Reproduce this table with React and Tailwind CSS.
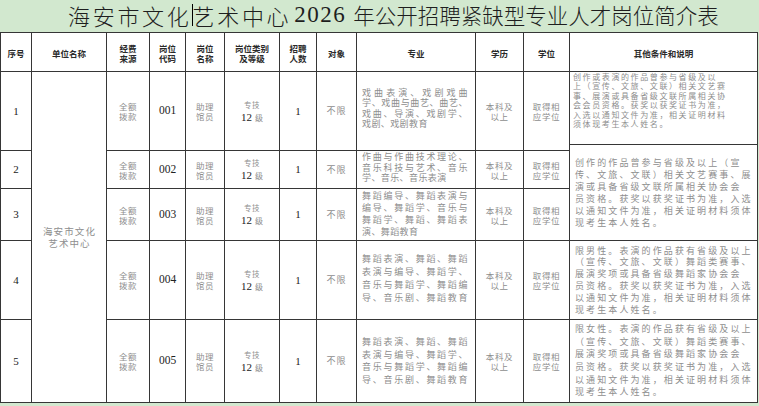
import React from "react";

const cjk = "font-['Noto_Sans_CJK_SC',sans-serif]";
const serif = "font-['Liberation_Serif','Noto_Sans_CJK_SC',serif]";
const gray = "text-[#8e8e8e]";

const rows = [
  {
    n: "1",
    code: "001",
    rc: "row-start-2 row-end-4",
    major: ["戏曲表演、戏剧戏曲", "学、戏曲与曲艺、曲艺、", "戏曲、导演、戏剧学、", "戏剧、戏剧教育"],
    majorLead: "leading-[10.5px] pb-[5px]",
    lastJustify: false,
  },
  {
    n: "2",
    code: "002",
    rc: "row-start-4 row-end-5",
    major: ["作曲与作曲技术理论、", "音乐科技与艺术、音乐", "学、音乐、音乐表演"],
    majorLead: "leading-[10.5px] pb-[3px]",
    lastJustify: false,
  },
  {
    n: "3",
    code: "003",
    rc: "row-start-5 row-end-6",
    major: ["舞蹈编导、舞蹈表演与", "编导、舞蹈学、音乐与", "舞蹈学、舞蹈、舞蹈表", "演、舞蹈教育"],
    majorLead: "leading-[12px] pb-[2px]",
    lastJustify: false,
  },
  {
    n: "4",
    code: "004",
    rc: "row-start-6 row-end-7",
    major: ["舞蹈表演、舞蹈、舞蹈", "表演与编导、舞蹈学、", "音乐与舞蹈学、舞蹈编", "导、音乐剧、舞蹈教育"],
    majorLead: "leading-[13px] pb-[4px]",
    lastJustify: true,
  },
  {
    n: "5",
    code: "005",
    rc: "row-start-7 row-end-8",
    major: ["舞蹈表演、舞蹈、舞蹈", "表演与编导、舞蹈学、", "音乐与舞蹈学、舞蹈编", "导、音乐剧、舞蹈教育"],
    majorLead: "leading-[12.5px]",
    lastJustify: true,
  },
];

const others = [
  {
    rc: "row-start-2 row-end-3 justify-start pl-[3px] text-[8px] tracking-[1.6px] leading-[9.4px] pt-[0px]",
    lines: [
      "创作或表演的作品曾参与省级及以",
      "上（宣传、文旅、文联）相关文艺赛",
      "事、展演或具备省级文联所属相关协",
      "会会员资格。获奖以获奖证书为准，",
      "入选以通知文件为准，相关证明材料",
      "须体现考生本人姓名。",
    ],
  },
  {
    rc: "row-start-3 row-end-6 justify-center pl-[5px] text-[9px] tracking-[2.1px] leading-[12px]",
    lines: [
      "创作的作品曾参与省级及以上（宣",
      "传、文旅、文联）相关文艺赛事、展",
      "演或具备省级文联所属相关协会会",
      "员资格。获奖以获奖证书为准，入选",
      "以通知文件为准，相关证明材料须体",
      "现考生本人姓名。",
    ],
  },
  {
    rc: "row-start-6 row-end-7 justify-center pl-[5px] text-[9px] tracking-[2.1px] leading-[11.8px]",
    lines: [
      "限男性。表演的作品获有省级及以上",
      "（宣传、文旅、文联）舞蹈类赛事、",
      "展演奖项或具备省级舞蹈家协会会",
      "员资格。获奖以获奖证书为准，入选",
      "以通知文件为准，相关证明材料须体",
      "现考生本人姓名。",
    ],
  },
  {
    rc: "row-start-7 row-end-8 justify-center pl-[5px] text-[9px] tracking-[2.1px] leading-[12.6px]",
    lines: [
      "限女性。表演的作品获有省级及以上",
      "（宣传、文旅、文联）舞蹈类赛事、",
      "展演奖项或具备省级舞蹈家协会会",
      "员资格。获奖以获奖证书为准，入选",
      "以通知文件为准，相关证明材料须体",
      "现考生本人姓名。",
    ],
  },
];

const headers = [
  ["col-start-1", ["序号"]],
  ["col-start-2", ["单位名称"]],
  ["col-start-3", ["经费", "来源"]],
  ["col-start-4", ["岗位", "代码"]],
  ["col-start-5", ["岗位", "名称"]],
  ["col-start-6", ["岗位类别", "及等级"]],
  ["col-start-7", ["招聘", "人数"]],
  ["col-start-8", ["对象"]],
  ["col-start-9", ["专业"]],
  ["col-start-10", ["学历"]],
  ["col-start-11", ["学位"]],
  ["col-start-12", ["其他条件和说明"]],
];

function Cell({ className = "", children }) {
  return <div className={`bg-white flex flex-col items-center justify-center ${className}`}>{children}</div>;
}

function Two({ a, b }) {
  return (
    <div className={`${cjk} ${gray} text-[8.5px] tracking-[0.6px] leading-[10px] text-center`}>
      <div>{a}</div>
      <div>{b}</div>
    </div>
  );
}

export default function App() {
  return (
    <div className="w-[759px] h-[406px] bg-[#d2e8cf] overflow-hidden">
      <div className="h-[32px] flex items-center pl-[68px] pb-[3px] text-[#1e1e1e] whitespace-nowrap">
        <span className={`${cjk} font-light text-[22px] tracking-[2.7px] leading-[28px]`}>海安市文化</span>
        <span className="inline-block w-px h-[22px] bg-black"></span>
        <span className={`${cjk} font-light text-[22px] tracking-[2.7px] leading-[28px]`}>艺术中心</span>
        <span className={`${serif} text-[23px] tracking-[1.5px] leading-[28px] ml-[3px] mr-[7px]`}>2026</span>
        <span className={`${cjk} font-light text-[21.5px] leading-[28px]`}>年公开招聘紧缺型专业人才岗位简介表</span>
      </div>
      <div className="w-[758px] grid grid-cols-[30px_74px_42px_35px_38px_54px_36px_39px_118px_47px_45px_187px] grid-rows-[38px_72px_5px_37px_51px_78px_82px] gap-px p-px bg-[#363636]">
        {headers.map(([c, lines], i) => (
          <Cell key={"h" + i} className={`row-start-1 ${c}`}>
            <div className={`${cjk} font-bold text-[8.5px] leading-[10px] text-[#2a2a2a] text-center pt-[1px]`}>
              {lines.map((l, j) => (
                <div key={j}>{l}</div>
              ))}
            </div>
          </Cell>
        ))}

        <Cell className="col-start-2 row-start-2 row-end-8">
          <div className={`${cjk} ${gray} text-[9.5px] tracking-[1.1px] leading-[12px] text-center pl-[1px]`}>
            <div>海安市文化</div>
            <div>艺术中心</div>
          </div>
        </Cell>

        {rows.map((r) => (
          <React.Fragment key={r.n}>
            <Cell className={`col-start-1 ${r.rc}`}>
              <span className={`${serif} text-[11px] text-[#222]`}>{r.n}</span>
            </Cell>
            <Cell className={`col-start-3 ${r.rc}`}>
              <Two a="全额" b="拨款" />
            </Cell>
            <Cell className={`col-start-4 ${r.rc}`}>
              <span className={`${serif} text-[11.5px] text-[#222]`}>{r.code}</span>
            </Cell>
            <Cell className={`col-start-5 ${r.rc}`}>
              <Two a="助理" b="馆员" />
            </Cell>
            <Cell className={`col-start-6 ${r.rc}`}>
              <div className="text-center leading-[10px]">
                <div className={`${cjk} ${gray} text-[7.5px] tracking-[0.5px]`}>专技</div>
                <div className="whitespace-nowrap">
                  <span className={`${serif} text-[11px] text-[#222]`}>12</span>
                  <span className={`${cjk} ${gray} text-[8px] ml-[3px]`}>级</span>
                </div>
              </div>
            </Cell>
            <Cell className={`col-start-7 ${r.rc}`}>
              <span className={`${serif} text-[11px] text-[#222]`}>1</span>
            </Cell>
            <Cell className={`col-start-8 ${r.rc}`}>
              <span className={`${cjk} ${gray} text-[9px] tracking-[1px]`}>不限</span>
            </Cell>
            <Cell className={`col-start-9 ${r.rc} items-stretch pl-[5px] pr-[7px]`}>
              <div className={`${cjk} ${gray} text-[9px] tracking-[0.4px] ${r.majorLead}`}>
                {r.major.map((l, j) => {
                  const last = j === r.major.length - 1;
                  return (
                    <div
                      key={j}
                      className={
                        !last || r.lastJustify
                          ? "whitespace-nowrap [text-align-last:justify] text-justify"
                          : "whitespace-nowrap"
                      }
                    >
                      {l}
                    </div>
                  );
                })}
              </div>
            </Cell>
            <Cell className={`col-start-10 ${r.rc}`}>
              <Two a="本科及" b="以上" />
            </Cell>
            <Cell className={`col-start-11 ${r.rc}`}>
              <Two a="取得相" b="应学位" />
            </Cell>
          </React.Fragment>
        ))}

        {others.map((o, i) => (
          <div key={"o" + i} className={`col-start-12 bg-white flex flex-col items-start ${o.rc} ${cjk} ${gray}`}>
            {o.lines.map((l, j) => (
              <div key={j} className="whitespace-nowrap">
                {l}
              </div>
            ))}
          </div>
        ))}
      </div>
    </div>
  );
}
